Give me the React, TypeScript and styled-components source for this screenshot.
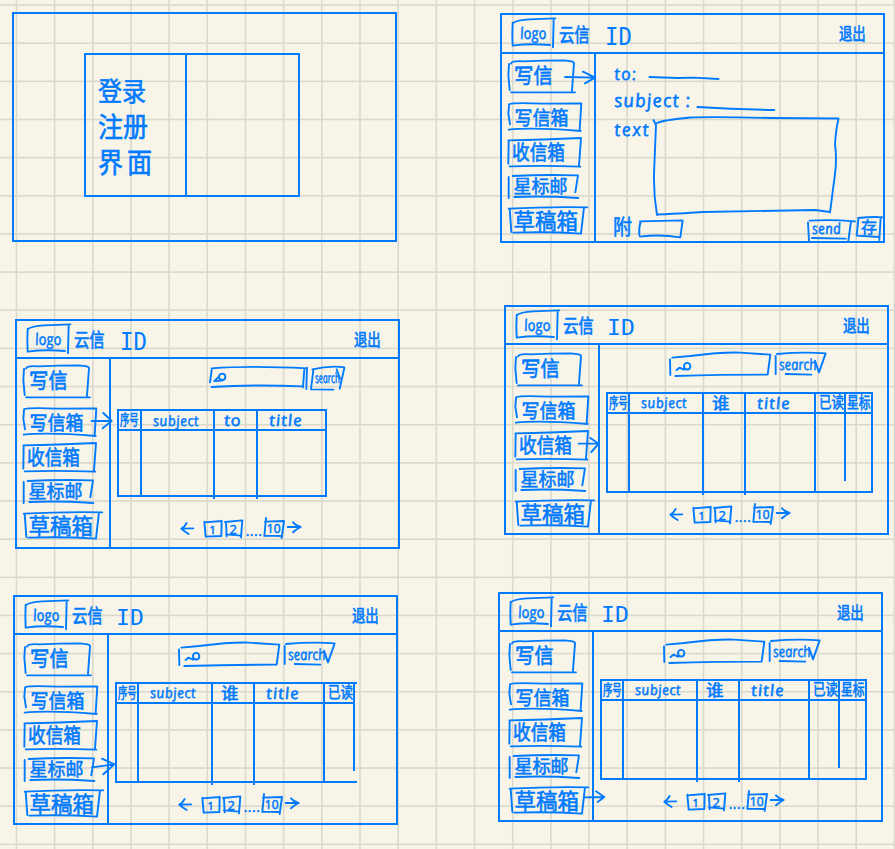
import React from "react";
import styled, { createGlobalStyle, css } from "styled-components";

const INK = "#007aff";
const PAPER = "#f8f5e8";
const RULE = "#dad9cd";
const CLEAR = "rgba(218, 217, 205, 0)";

const GlobalStyle = createGlobalStyle`
  html, body { margin: 0; padding: 0; background: ${PAPER}; overflow: hidden; }
  *, *::before, *::after { box-sizing: border-box; }
`;

/* ---------- board ---------- */

const Board = styled.main`
  width: 895px;
  height: 849px;
  overflow: hidden;
  display: grid;
  grid-template-columns: 488px 407px;
  grid-template-rows: 290px 290px 269px;
  align-items: start;
  justify-items: start;
  color: ${INK};
  font-family: "Open Sans", "Noto Sans CJK SC", sans-serif;
  background-color: ${PAPER};
  background-image: repeating-linear-gradient(
      to right,
      ${CLEAR} 0 15.2px,
      ${RULE} 16.1px 16.8px,
      ${CLEAR} 17.7px 38.17px
    ),
    repeating-linear-gradient(
      to bottom,
      ${CLEAR} 0 3.8px,
      ${RULE} 4.7px 5.4px,
      ${CLEAR} 6.3px 38.15px
    );
`;

const Frame = styled.section<{ $x: number; $y: number }>`
  width: 385px;
  height: 230px;
  margin: ${(p) => p.$y}px 0 0 ${(p) => p.$x}px;
  border: 2px solid ${INK};
  display: flex;
  flex-direction: column;
`;

/* ---------- pen strokes and handwriting ---------- */

type Box = [number, number, number, number];

const StrokeSvg = styled.svg`
  display: block;
  flex: none;
  overflow: visible;
  fill: none;
  stroke: ${INK};
  stroke-width: 1.9px;
  stroke-linecap: round;
  stroke-linejoin: round;
  path {
    vector-effect: non-scaling-stroke;
  }
`;

const Backdrop = styled(StrokeSvg)`
  position: absolute;
  left: 0;
  top: 0;
`;

function Pen({ box, d, scale = 3, behind }: { box: Box; d: string; scale?: number; behind?: boolean }) {
  const Svg = behind ? Backdrop : StrokeSvg;
  return (
    <Svg width={box[2] / scale} height={box[3] / scale} viewBox={box.join(" ")} aria-hidden>
      <path d={d} />
    </Svg>
  );
}

const Ink = styled.span<{
  $size: number;
  $w?: number;
  $sx?: number;
  $sy?: number;
  $gap?: number;
  $turn?: number;
  $drop?: number;
}>`
  display: block;
  flex: none;
  width: ${(p) => (p.$w ? `${p.$w}px` : "auto")};
  font-size: ${(p) => p.$size}px;
  line-height: 1;
  letter-spacing: ${(p) => p.$gap ?? 0}px;
  white-space: nowrap;
  -webkit-text-stroke: 0.55px ${INK};
  margin-top: ${(p) => p.$drop ?? 0}px;
  transform-origin: left center;
  transform: rotate(${(p) => p.$turn ?? 0}deg) scale(${(p) => p.$sx ?? 1}, ${(p) => p.$sy ?? 1});
`;

const Script = styled(Ink)`
  font-style: italic;
  font-weight: 500;
  transform: rotate(${(p) => p.$turn ?? 0}deg) skewX(8deg) scale(${(p) => p.$sx ?? 1}, ${(p) => p.$sy ?? 1});
`;

const Initials = styled(Ink)`
  font-family: "DejaVu Sans Mono", monospace;
  -webkit-text-stroke: 0;
`;

/* ---------- login page ---------- */

const LoginCard = styled.div`
  width: 216px;
  height: 144px;
  margin: 39px 0 0 70px;
  border: 2px solid ${INK};
  display: flex;
`;

const LoginTitle = styled.div`
  width: 101px;
  border-right: 2px solid ${INK};
  padding: 24px 0 0 12px;
  display: flex;
  flex-direction: column;
  gap: 11px;
`;

/* ---------- mail shell ---------- */

const Header = styled.header<{ $tall?: boolean }>`
  height: ${(p) => (p.$tall ? 39 : 38)}px;
  flex: none;
  border-bottom: 2px solid ${INK};
  display: flex;
  align-items: center;
  padding-left: 10px;
`;

const Logo = styled.div`
  position: relative;
  width: 43px;
  height: 29px;
  margin-top: -2px;
  padding: 7px 0 0 8px;
`;

const Brand = styled.div`
  width: 44px;
  padding-left: 4px;
  padding-top: 2px;
`;

const UserId = styled.div<{ $large?: boolean }>`
  width: 240px;
  padding-top: 6px;
  padding-left: ${(p) => (p.$large ? 6 : 4)}px;
`;

const Body = styled.div`
  flex: 1;
  min-height: 0;
  display: flex;
`;

const Sidebar = styled.nav<{ $tight?: boolean }>`
  width: 94px;
  flex: none;
  border-right: 2px solid ${INK};
  padding: ${(p) => (p.$tight ? "6px 0 0 6px" : "8px 0 0 9px")};
`;

const NavItem = styled.div<{ $w: number; $h: number; $gap: number; $pad: number; $left: number }>`
  position: relative;
  width: ${(p) => p.$w}px;
  height: ${(p) => p.$h}px;
  margin-top: ${(p) => p.$gap}px;
  margin-left: ${(p) => p.$left}px;
  padding-left: ${(p) => p.$pad}px;
  display: flex;
  align-items: center;
`;

const Main = styled.div`
  flex: 1;
  min-width: 0;
  display: flex;
  flex-direction: column;
`;

const NAV: {
  label: string;
  box: Box;
  d: string;
  gap: number;
  pad: number;
  left: number;
  size: number;
  sx: number;
  sy: number;
}[] = [
  {
    label: "写信",
    box: [73, 160, 199, 100],
    d: "M76 172 L74 205 78 250 M82 171 Q84 161 120 164 L180 162 L240 161 Q272 163 271 170 L265 252 M82 257 L274 257",
    gap: 0, pad: 6, left: 0, size: 19, sx: 1.02, sy: 1.13,
  },
  {
    label: "写信箱",
    box: [75, 290, 221, 88],
    d: "M78 300 L76 325 81 357 M78 297 Q90 291 180 295 L295 294 290 374 M77 373 Q150 365 293 377",
    gap: 9, pad: 6.5, left: 0, size: 18, sx: 1, sy: 1.1,
  },
  {
    label: "收信箱",
    box: [77, 396, 219, 87],
    d: "M79 405 L78 473 M78 403 Q180 401 296 396 L290 478 M82 481 Q190 478 294 482",
    gap: 6, pad: 4, left: 0.3, size: 18, sx: 0.98, sy: 1.15,
  },
  {
    label: "星标邮",
    box: [77, 505, 208, 74],
    d: "M76 514 L76 577 M88 511 Q180 506 284 509 L276 560 M93 574 Q180 570 285 577",
    gap: 7.3, pad: 5, left: 0.5, size: 18, sx: 1, sy: 1,
  },
  {
    label: "草稿箱",
    box: [77, 605, 235, 80],
    d: "M79 610 L84 680 M76 610 Q190 604 312 606 M302 606 L293 685 M90 682 Q200 679 293 685",
    gap: 8.5, pad: 5, left: 0.5, size: 21.5, sx: 1, sy: 1.02,
  },
];

/* pointer from the selected folder to the content area */
const ARROWS = [
  "M244 211 L334 213 M298 195 L334 213 304 230",
  "M281 332 L341 332 M316 308 L341 332 314 354",
  "M268 434 L328 434 M303 417 L328 434 306 459",
  "M278 536 L345 527 M308 510 L345 527 312 557",
  "M302 636 L360 635 M335 618 L360 635 340 650",
];

function Shell({
  x,
  y,
  active,
  tight,
  children,
}: {
  x: number;
  y: number;
  active: number;
  tight?: boolean;
  children: React.ReactNode;
}) {
  return (
    <Frame $x={x} $y={y}>
      <Header $tall={active === 0}>
        <Logo>
          <Pen
            behind
            box={[78, 30, 129, 87]}
            d="M80 44 L79 80 80 113 Q130 106 192 111 M80 46 Q90 36 130 34 L208 31 M203 32 L201 118"
          />
          <Script $size={16} $sx={0.86} $sy={1}>logo</Script>
        </Logo>
        <Brand>
          <Ink $size={16} $sx={0.96} $sy={1.2}>云信</Ink>
        </Brand>
        <UserId $large={tight}>
          <Initials $size={tight ? 24 : 21} $sx={tight ? 0.93 : 1.1} $w={30}>ID</Initials>
        </UserId>
        <Ink $size={14} $sx={0.96} $sy={1.25} $gap={-0.3} $drop={1}>退出</Ink>
      </Header>
      <Body>
        <Sidebar $tight={tight}>
          {NAV.map((n, i) => (
            <NavItem key={n.label} $w={n.box[2] / 3} $h={n.box[3] / 3} $gap={n.gap} $pad={n.pad} $left={n.left}>
              <Pen behind box={n.box} d={i === active ? `${n.d} ${ARROWS[i]}` : n.d} />
              <Ink $size={n.size} $sx={n.sx} $sy={n.sy} $turn={i === 0 ? -1 : 0}>
                {n.label}
              </Ink>
            </NavItem>
          ))}
        </Sidebar>
        <Main>{children}</Main>
      </Body>
    </Frame>
  );
}

/* ---------- search ---------- */

const SearchRow = styled.div<{ $small?: boolean }>`
  display: flex;
  gap: ${(p) => (p.$small ? 4 : 4.5)}px;
  height: 24px;
  margin: ${(p) => (p.$small ? "7px 0 0 99px" : "6.5px 0 0 70px")};
`;

const SearchButton = styled.div<{ $small?: boolean }>`
  position: relative;
  padding: ${(p) => (p.$small ? "5px 0 0 4px" : "4px 0 0 4px")};
`;

const LENS = "M560 210 L568 203 L582 209 M582 199 C581 186 601 185 601 198 C601 212 583 212 582 199";

function Search({ small }: { small?: boolean }) {
  if (small) {
    return (
      <SearchRow $small>
        <Pen
          box={[30, 168, 292, 70]}
          d="M35 180 L30 217 M35 175 Q150 166 321 175 M321 173 L319 237 M313 178 L309 232 M35 231 Q150 223 308 229 M43 213 L57 200 M57 201 C56 188 76 187 76 200 C76 213 58 213 57 201 M43 213 L66 212"
        />
        <SearchButton $small>
          <Pen
            behind
            box={[333, 162, 102, 72]}
            d="M340 175 L333 231 M337 172 Q390 160 433 166 M433 168 L419 230 M410 172 L420 200 M333 232 L400 233"
          />
          <Script $size={14} $sx={0.6} $sy={1}>search</Script>
        </SearchButton>
      </SearchRow>
    );
  }
  return (
    <SearchRow>
      <Pen
        box={[540, 156, 301, 72]}
        d={`M540 178 L541 225 M547 173 L600 168 Q700 156 750 158 L841 164 833 224 Q700 224 556 228 ${LENS}`}
      />
      <SearchButton>
        <Pen
          behind
          box={[856, 156, 154, 72]}
          d="M858 168 L858 222 M862 162 Q940 155 1008 160 L988 217 976 182 M888 222 L965 224"
        />
        <Script $size={16} $sx={0.8} $sy={0.95}>search</Script>
      </SearchButton>
    </SearchRow>
  );
}

/* ---------- table ---------- */

const Table = styled.div<{ $h: number; $top: number; $open?: boolean; $w: number }>`
  width: ${(p) => p.$w}px;
  height: ${(p) => p.$h}px;
  margin: ${(p) => p.$top}px 0 0 6px;
  border: 2px solid ${INK};
  display: flex;
  ${(p) =>
    p.$open &&
    css`
      border-right: 0;
    `}
`;

const Column = styled.div<{ $w: number; $end: number; $last?: boolean }>`
  width: ${(p) => p.$w + (p.$last ? 0 : 2)}px;
  flex: none;
  margin-bottom: ${(p) => p.$end}px;
  border-right: ${(p) => (p.$last ? "0" : `2px solid ${INK}`)};
`;

const HeadCell = styled.div<{ $pad: number }>`
  height: 20px;
  border-bottom: 2px solid ${INK};
  display: flex;
  align-items: center;
  padding-left: ${(p) => p.$pad}px;
`;

type Col = { label: string; w: number; end?: number };

const LABELS: Record<string, { pad: number; size: number; sx: number; sy: number; latin?: boolean; gap?: number }> = {
  序号: { pad: 1, size: 12, sx: 0.78, sy: 1.2 },
  subject: { pad: 11, size: 15, sx: 0.9, sy: 0.95, latin: true, gap: 0.6 },
  谁: { pad: 8, size: 16, sx: 1.1, sy: 1 },
  to: { pad: 9, size: 16, sx: 1.1, sy: 1, latin: true, gap: 0.6 },
  title: { pad: 11, size: 16, sx: 1.06, sy: 0.98, latin: true, gap: 1 },
  已读: { pad: 3, size: 13.5, sx: 0.93, sy: 1.15 },
  星标: { pad: 1, size: 13, sx: 0.9, sy: 1.25 },
};

function MailTable({ cols, w, h, top, open }: { cols: Col[]; w: number; h: number; top: number; open?: boolean }) {
  return (
    <Table $w={w} $h={h} $top={top} $open={open}>
      {cols.map((c, i) => {
        const l = LABELS[c.label];
        const Word = l.latin ? Script : Ink;
        return (
          <Column key={c.label} $w={c.w} $end={c.end ?? 0} $last={!open && i === cols.length - 1}>
            <HeadCell $pad={l.pad}>
              <Word $size={l.size} $sx={l.sx} $sy={l.sy} $gap={l.gap}>
                {c.label}
              </Word>
            </HeadCell>
          </Column>
        );
      })}
    </Table>
  );
}

const SENT: Col[] = [
  { label: "序号", w: 21 },
  { label: "subject", w: 71, end: -4 },
  { label: "to", w: 41, end: -4 },
  { label: "title", w: 67 },
];
const STARRED: Col[] = [
  { label: "序号", w: 20 },
  { label: "subject", w: 72, end: -4 },
  { label: "谁", w: 40, end: -4 },
  { label: "title", w: 68 },
  { label: "已读", w: 28, end: 10 },
];
const INBOX: Col[] = [...STARRED, { label: "星标", w: 25 }];

/* ---------- pager ---------- */

const PagerRow = styled.div`
  display: flex;
  align-items: center;
  height: 22px;
  margin: auto 0 7px 70px;
`;

const PageBox = styled.div<{ $w: number; $ml: number }>`
  position: relative;
  width: ${(p) => p.$w}px;
  height: 18px;
  margin-left: ${(p) => p.$ml}px;
  display: flex;
  align-items: center;
  justify-content: center;
`;

const Dots = styled.div`
  width: 22px;
  padding: 4px 0 0 4px;
`;

const ArrowRight = styled.div`
  margin: -4px 0 0 3px;
`;

function Pager() {
  return (
    <PagerRow>
      <Pen box={[540, 632, 38, 34]} d="M541 649 L577 648 M557 632 Q550 645 541 649 Q552 658 563 665" />
      <PageBox $w={18} $ml={10}>
        <Pen behind box={[8, 620, 54, 54]} d="M9 625 L13 670 60 668 61 622 M9 627 L61 623" />
        <Ink $size={11}>1</Ink>
      </PageBox>
      <PageBox $w={17} $ml={3}>
        <Pen behind box={[70, 620, 52, 54]} d="M73 628 L75 669 M70 626 L122 621 118 672 M73 663 L118 667" />
        <Ink $size={13} $sy={0.9}>2</Ink>
      </PageBox>
      <Dots>
        <Ink $size={14} $gap={0.5}>....</Ink>
      </Dots>
      <PageBox $w={20} $ml={0}>
        <Pen behind box={[187, 618, 60, 54]} d="M193 612 L188 666 M190 623 L247 621 240 672 M188 665 L240 666" />
        <Ink $size={12}>10</Ink>
      </PageBox>
      <ArrowRight>
        <Pen box={[258, 624, 42, 32]} d="M260 639 L299 639 M276 625 Q284 635 299 639 Q287 645 276 655" />
      </ArrowRight>
    </PagerRow>
  );
}

/* ---------- compose ---------- */

const Field = styled.div<{ $top: number; $h: number }>`
  display: flex;
  align-items: flex-start;
  height: ${(p) => p.$h}px;
  margin: ${(p) => p.$top}px 0 0 18px;
`;

const Underline = styled.div<{ $ml: number; $mt: number }>`
  margin: ${(p) => p.$mt}px 0 0 ${(p) => p.$ml}px;
`;

const Actions = styled.div`
  display: flex;
  height: 26px;
  margin: 0 0 0 17px;
`;

const Attach = styled.div`
  width: 26px;
  padding-top: 2px;
`;

const AttachBox = styled.div`
  width: 168px;
  padding-top: 5px;
`;

const ActionButton = styled.div<{ $w: number; $mt: number; $ml: number }>`
  position: relative;
  width: ${(p) => p.$w}px;
  height: 20px;
  margin: ${(p) => p.$mt}px 0 0 ${(p) => p.$ml}px;
  padding-left: 5px;
`;

function Compose() {
  return (
    <>
      <Field $top={11} $h={26}>
        <Script $size={17} $w={28} $gap={1.2}>to:</Script>
        <Underline $ml={7} $mt={12}>
          <Pen box={[475, 232, 210, 8]} d="M476 232 L560 235 610 234 684 238" />
        </Underline>
      </Field>
      <Field $top={0} $h={27}>
        <Script $size={18.5} $w={78} $gap={1.1}>subject :</Script>
        <Underline $ml={5} $mt={16}>
          <Pen box={[621, 318, 233, 10]} d="M622 318 Q740 325 853 327" />
        </Underline>
      </Field>
      <Field $top={0} $h={98}>
        <Script $size={18} $w={39} $drop={3} $gap={1.6}>text</Script>
        <Pen
          scale={1}
          box={[653, 118, 186, 98]}
          d="M653.5 121 L656 126 Q655 150 654 175 Q653.5 195 657 216 M657 124 Q664 121 690 118.5 Q715 117.5 770 119 L838.5 119.5 Q836 130 835 145 Q837 160 835 175 L830 213.5 M657 215.5 Q690 214 703 213 Q780 211.5 815 211 L830 213"
        />
      </Field>
      <Actions>
        <Attach>
          <Ink $size={19} $sy={1.1}>附</Ink>
        </Attach>
        <AttachBox>
          <Pen box={[447, 288, 131, 52]} d="M452 293 Q446 310 448 333 M450 292 L578 289 571 340 Q510 330 450 338" />
        </AttachBox>
        <ActionButton $w={48} $mt={5} $ml={0}>
          <Pen behind box={[950, 287, 145, 60]} d="M953 294 L956 350 M958 289 Q1020 285 1094 291 M1082 291 L1074 350 M965 341 L1066 343" />
          <Script $size={15} $sx={0.88} $gap={0.4} $drop={1}>send</Script>
        </ActionButton>
        <ActionButton $w={27} $mt={2} $ml={1}>
          <Pen behind box={[1098, 277, 82, 62]} d="M1105 283 L1100 333 1168 337 M1104 280 Q1150 275 1180 278 M1172 279 L1168 346" />
          <Ink $size={16} $drop={2}>存</Ink>
        </ActionButton>
      </Actions>
    </>
  );
}

/* ---------- page ---------- */

export default function App() {
  return (
    <>
      <GlobalStyle />
      <Board>
        <Frame $x={12} $y={12}>
          <LoginCard>
            <LoginTitle>
              <Ink $size={24} $sy={1.08}>登录</Ink>
              <Ink $size={25} $sy={1.08}>注册</Ink>
              <Ink $size={25} $gap={4} $sy={1.15}>界面</Ink>
            </LoginTitle>
          </LoginCard>
        </Frame>

        <Shell x={12} y={13} active={0} tight>
          <Compose />
        </Shell>

        <Shell x={15} y={29} active={1} tight>
          <Search small />
          <MailTable cols={SENT} w={210} h={88} top={19} />
          <Pager />
        </Shell>

        <Shell x={16} y={15} active={2}>
          <Search />
          <MailTable cols={INBOX} w={267} h={101} top={16} />
          <Pager />
        </Shell>

        <Shell x={13} y={15} active={3}>
          <Search />
          <MailTable cols={STARRED} w={242} h={101} top={16} open />
          <Pager />
        </Shell>

        <Shell x={10} y={12} active={4}>
          <Search />
          <MailTable cols={INBOX} w={267} h={101} top={16} />
          <Pager />
        </Shell>
      </Board>
    </>
  );
}
